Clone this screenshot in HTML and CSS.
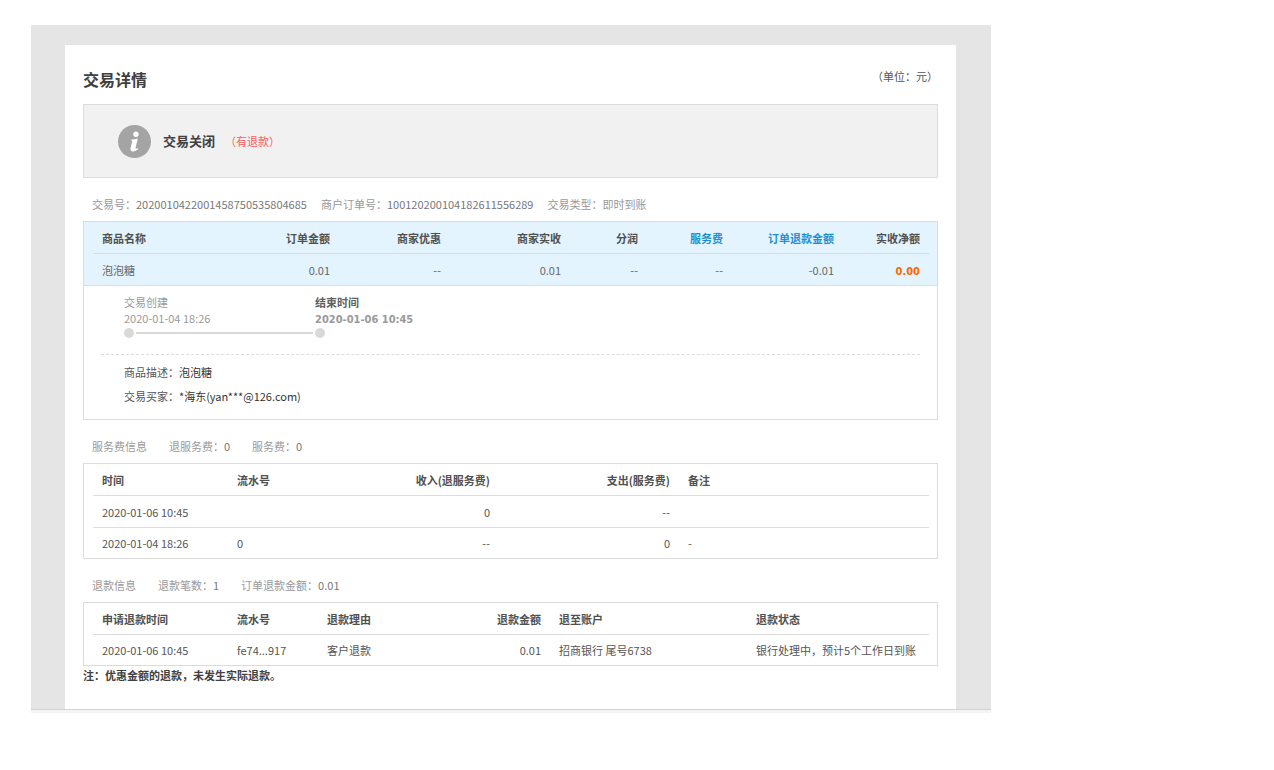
FILE: index.html
```html
<!DOCTYPE html>
<html lang="zh-CN">
<head>
<meta charset="utf-8">
<title>交易详情</title>
<link rel="stylesheet" href="styles.css">
</head>
<body>
<div class="page">
  <main class="panel">
    <header class="panel-head">
      <h1 class="title">交易详情</h1>
      <span class="unit">（单位：元）</span>
    </header>

    <section class="status">
      <svg class="status-icon" viewBox="0 0 32 32" aria-hidden="true">
        <circle cx="16" cy="16" r="16" fill="#a4a4a4"/>
        <circle cx="17.4" cy="9" r="2.6" fill="#fff"/>
        <path d="M12.6 14.2C14.6 14 17 13.6 19.2 13L17.1 21.8C16.8 23.2 17.7 23.5 19.3 22.4L19.6 23.3C17.6 25.2 15.7 25.8 14.1 25.6C12.2 25.3 11.8 23.9 12.2 22.2L13.7 16.2C13.9 15.3 13.5 15.1 12.5 15.1Z" fill="#fff"/>
      </svg>
      <strong class="status-text">交易关闭</strong>
      <span class="status-note">（有退款）</span>
    </section>

    <div class="meta meta-trade">
      <span>交易号：<b>2020010422001458750535804685</b></span>
      <span>商户订单号：<b>100120200104182611556289</b></span>
      <span>交易类型：即时到账</span>
    </div>
    <section class="card">
      <div class="summary">
        <table class="grid">
          <colgroup><col class="w-136"><col class="w-110"><col class="w-111"><col class="w-120"><col class="w-77"><col class="w-85"><col class="w-111"><col class="w-86"></colgroup>
          <thead>
            <tr><th>商品名称</th><th class="num">订单金额</th><th class="num">商家优惠</th><th class="num">商家实收</th><th class="num">分润</th><th class="num"><a class="link" href="#">服务费</a></th><th class="num"><a class="link" href="#">订单退款金额</a></th><th class="num">实收净额</th></tr>
          </thead>
          <tbody>
            <tr><td>泡泡糖</td><td class="num">0.01</td><td class="num">--</td><td class="num">0.01</td><td class="num">--</td><td class="num">--</td><td class="num">-0.01</td><td class="num"><b class="strong-num net">0.00</b></td></tr>
          </tbody>
        </table>
      </div>
      <ol class="timeline">
        <li class="step">
          <span>交易创建</span>
          <time>2020-01-04 18:26</time>
          <span class="track"><i class="dot"></i><i class="line"></i></span>
        </li>
        <li class="step">
          <span class="step-name">结束时间</span>
          <time><b class="strong-num">2020-01-06 10:45</b></time>
          <span class="track"><i class="dot"></i></span>
        </li>
      </ol>
      <div class="desc">
        <p>商品描述：<span class="value">泡泡糖</span></p>
        <p>交易买家：<span class="value">*海东(yan***@126.com)</span></p>
      </div>
    </section>

    <div class="meta">
      <span>服务费信息</span>
      <span>退服务费：<b>0</b></span>
      <span>服务费：<b>0</b></span>
    </div>
    <section class="card inset">
      <table class="grid">
        <colgroup><col class="w-135"><col class="w-120"><col class="w-151"><col class="w-180"><col class="w-250"></colgroup>
        <thead>
          <tr><th>时间</th><th>流水号</th><th class="num">收入(退服务费)</th><th class="num">支出(服务费)</th><th>备注</th></tr>
        </thead>
        <tbody>
          <tr><td>2020-01-06 10:45</td><td></td><td class="num">0</td><td class="num">--</td><td></td></tr>
          <tr><td>2020-01-04 18:26</td><td>0</td><td class="num">--</td><td class="num">0</td><td>-</td></tr>
        </tbody>
      </table>
    </section>

    <div class="meta">
      <span>退款信息</span>
      <span>退款笔数：<b>1</b></span>
      <span>订单退款金额：<b>0.01</b></span>
    </div>
    <section class="card inset">
      <table class="grid">
        <colgroup><col class="w-135"><col class="w-90"><col class="w-100"><col class="w-132"><col class="w-197"><col class="w-182"></colgroup>
        <thead>
          <tr><th>申请退款时间</th><th>流水号</th><th>退款理由</th><th class="num">退款金额</th><th>退至账户</th><th>退款状态</th></tr>
        </thead>
        <tbody>
          <tr><td>2020-01-06 10:45</td><td>fe74...917</td><td>客户退款</td><td class="num">0.01</td><td>招商银行 尾号6738</td><td>银行处理中，预计5个工作日到账</td></tr>
        </tbody>
      </table>
    </section>
    <p class="note">注：优惠金额的退款，未发生实际退款。</p>
  </main>
</div>
</body>
</html>
```
FILE: styles.css
```css
* {
  box-sizing: border-box;
}

body {
  margin: 0;
  padding: 25px 31px;
  background: #fff;
  color: #555;
  font: 11px/16px "Noto Sans CJK SC", "Noto Sans", sans-serif;
}

h1, p, ol {
  margin: 0;
  padding: 0;
}

.page {
  max-width: 960px;
  padding: 20px 35px 0 34px;
  background: #e5e5e5;
  border-bottom: 1px solid #d2d2d2;
  box-shadow: 0 3px 0 #f4f4f4;
}

.panel {
  padding: 22px 18px 26px;
  background: #fff;
}

.panel-head {
  display: flex;
  justify-content: space-between;
  align-items: flex-start;
  height: 37px;
}

.title {
  color: #404040;
  font-size: 16px;
  line-height: 24px;
  font-weight: 700;
}

.unit {
  line-height: 18px;
}

.status {
  display: flex;
  align-items: center;
  height: 74px;
  padding-left: 34px;
  background: #f1f1f1;
  border: 1px solid #dcdcdc;
}

.status-icon {
  width: 33px;
  height: 33px;
}

.status-text {
  margin-left: 12px;
  color: #404040;
  font-size: 13px;
  font-weight: 700;
}

.status-note {
  margin-left: 10px;
  color: #ff5c5c;
}

.meta {
  display: flex;
  gap: 22px;
  height: 43px;
  padding: 18px 9px 0;
  color: #999;
}

.meta-trade {
  gap: 14px;
}

.meta b {
  color: #777;
  font-weight: 400;
}

.card {
  border: 1px solid #dcdcdc;
}

.inset {
  padding: 0 9px;
}

.summary {
  padding: 0 9px;
  background: #e3f4ff;
  border-bottom: 1px solid #dcdcdc;
}

.grid {
  width: 100%;
  table-layout: fixed;
  border-collapse: separate;
  border-spacing: 0;
}

.grid th,
.grid td {
  height: 32px;
  padding: 0 9px;
  border-bottom: 1px solid #dcdcdc;
  text-align: left;
  white-space: nowrap;
}

.grid th {
  color: #505050;
  font-weight: 700;
}

.grid tr:last-child td {
  height: 31px;
  border-bottom: 0;
}

.grid thead tr:last-child th {
  border-bottom: 1px solid #dcdcdc;
}

.inset .grid tbody tr:last-child td {
  height: 30px;
}

.grid .num {
  text-align: right;
}

.summary td {
  color: #666;
}

.link {
  color: #1c90d4;
  text-decoration: none;
}

.strong-num {
  font-family: "DejaVu Sans Condensed", "DejaVu Sans", sans-serif;
  font-weight: 700;
  line-height: 1;
}

.net {
  color: #ff6600;
}

.w-77 { width: 77px; }
.w-85 { width: 85px; }
.w-86 { width: 86px; }
.w-90 { width: 90px; }
.w-100 { width: 100px; }
.w-110 { width: 110px; }
.w-111 { width: 111px; }
.w-120 { width: 120px; }
.w-132 { width: 132px; }
.w-135 { width: 135px; }
.w-136 { width: 136px; }
.w-151 { width: 151px; }
.w-180 { width: 180px; }
.w-182 { width: 182px; }
.w-197 { width: 197px; }
.w-250 { width: 250px; }

.timeline {
  display: flex;
  margin: 0 17px;
  padding: 8px 23px 14px;
  border-bottom: 1px dashed #dcdcdc;
  list-style: none;
}

.step {
  display: flex;
  flex-direction: column;
  width: 191px;
  color: #999;
}

.step-name {
  color: #606060;
  font-weight: 700;
}

.track {
  display: flex;
  align-items: center;
  gap: 2px;
  height: 14px;
  padding-right: 2px;
}

.dot {
  width: 10px;
  height: 10px;
  background: #d9d9d9;
  border-radius: 50%;
}

.line {
  flex: 1;
  height: 2px;
  background: #d9d9d9;
}

.desc {
  padding: 5px 40px 11px;
  line-height: 24px;
}

.value {
  color: #333;
}

.note {
  padding-top: 1px;
  color: #404040;
  font-weight: 700;
}
```
